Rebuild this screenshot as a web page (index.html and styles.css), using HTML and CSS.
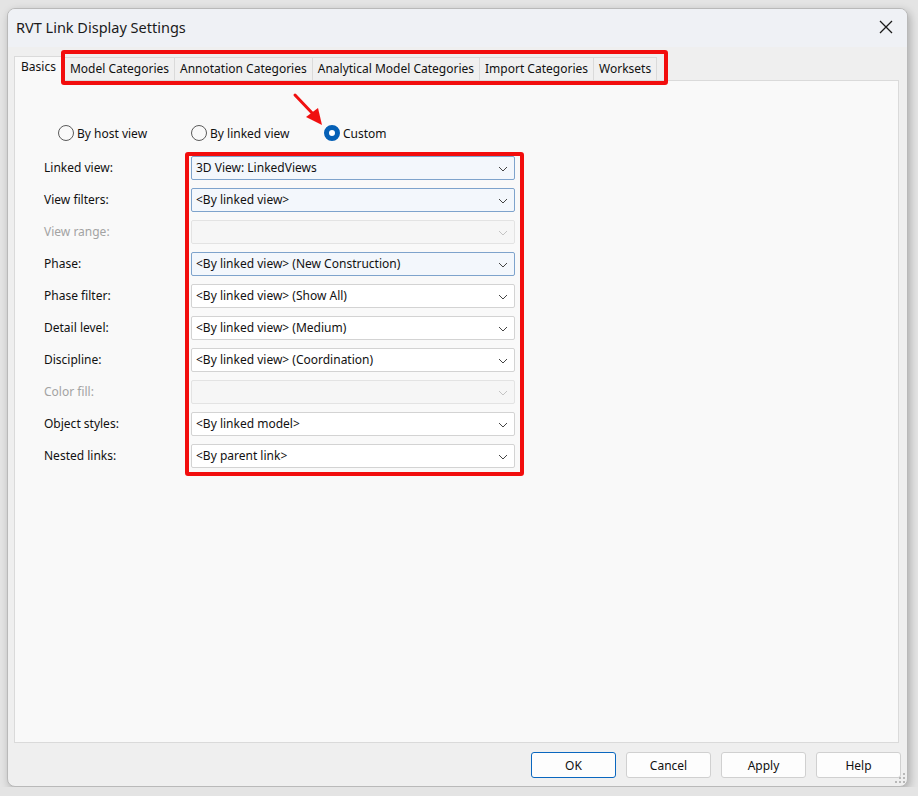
FILE: index.html
```html
<!DOCTYPE html>
<html lang="en">
<head>
  <meta charset="UTF-8" />
  <title>RVT Link Display Settings</title>
  <link rel="stylesheet" href="styles.css">
</head>
<body>

  <div class="window">
    <div class="titlebar">
      <span class="title">RVT Link Display Settings</span>
      <svg class="close" width="14" height="14" viewBox="0 0 14 14">
        <path d="M1 1 L13 13 M13 1 L1 13" stroke="#1a1a1a" stroke-width="1.3" fill="none" />
      </svg>
    </div>

    <div class="content">
      <div class="tabs">
        <div class="tab active">Basics</div>
        <div class="tab-group">
          <div class="tab">Model Categories</div>
          <div class="tab">Annotation Categories</div>
          <div class="tab">Analytical Model Categories</div>
          <div class="tab">Import Categories</div>
          <div class="tab">Worksets</div>
        </div>
      </div>

      <div class="panel">
        <svg class="arrow" width="34" height="36" viewBox="0 0 34 36">
          <path d="M3 3 L22 23" stroke="#f01010" stroke-width="3" stroke-linecap="round" fill="none" />
          <path d="M14 25 L30 33 L26 16 Z" fill="#f01010" />
        </svg>

        <div class="radios">
          <label class="radio"><span class="dot"></span>By host view</label>
          <label class="radio"><span class="dot"></span>By linked view</label>
          <label class="radio checked"><span class="dot"></span>Custom</label>
        </div>

        <div class="form">
          <div class="labels">
            <div class="label">Linked view:</div>
            <div class="label">View filters:</div>
            <div class="label disabled">View range:</div>
            <div class="label">Phase:</div>
            <div class="label">Phase filter:</div>
            <div class="label">Detail level:</div>
            <div class="label">Discipline:</div>
            <div class="label disabled">Color fill:</div>
            <div class="label">Object styles:</div>
            <div class="label">Nested links:</div>
          </div>

          <div class="combos">
            <div class="combo hot">3D View: LinkedViews<svg class="chev" viewBox="0 0 10 6"><path d="M1 1 L5 5 L9 1" /></svg></div>
            <div class="combo hot">&lt;By linked view&gt;<svg class="chev" viewBox="0 0 10 6"><path d="M1 1 L5 5 L9 1" /></svg></div>
            <div class="combo disabled"><svg class="chev" viewBox="0 0 10 6"><path d="M1 1 L5 5 L9 1" /></svg></div>
            <div class="combo hot">&lt;By linked view&gt; (New Construction)<svg class="chev" viewBox="0 0 10 6"><path d="M1 1 L5 5 L9 1" /></svg></div>
            <div class="combo">&lt;By linked view&gt; (Show All)<svg class="chev" viewBox="0 0 10 6"><path d="M1 1 L5 5 L9 1" /></svg></div>
            <div class="combo">&lt;By linked view&gt; (Medium)<svg class="chev" viewBox="0 0 10 6"><path d="M1 1 L5 5 L9 1" /></svg></div>
            <div class="combo">&lt;By linked view&gt; (Coordination)<svg class="chev" viewBox="0 0 10 6"><path d="M1 1 L5 5 L9 1" /></svg></div>
            <div class="combo disabled"><svg class="chev" viewBox="0 0 10 6"><path d="M1 1 L5 5 L9 1" /></svg></div>
            <div class="combo">&lt;By linked model&gt;<svg class="chev" viewBox="0 0 10 6"><path d="M1 1 L5 5 L9 1" /></svg></div>
            <div class="combo">&lt;By parent link&gt;<svg class="chev" viewBox="0 0 10 6"><path d="M1 1 L5 5 L9 1" /></svg></div>
          </div>
        </div>
      </div>

      <div class="buttons">
        <button class="default">OK</button>
        <button>Cancel</button>
        <button>Apply</button>
        <button>Help</button>
      </div>
    </div>

    <svg class="grip" width="10" height="10" viewBox="0 0 10 10">
      <rect x="8" y="0" width="2" height="2" fill="#b8b8b8" />
      <rect x="4" y="4" width="2" height="2" fill="#b8b8b8" />
      <rect x="8" y="4" width="2" height="2" fill="#b8b8b8" />
      <rect x="0" y="8" width="2" height="2" fill="#b8b8b8" />
      <rect x="4" y="8" width="2" height="2" fill="#b8b8b8" />
      <rect x="8" y="8" width="2" height="2" fill="#b8b8b8" />
    </svg>
  </div>

</body>
</html>
```

FILE: styles.css
```css
body {
  margin: 0;
  background-color: #e4e4e4;
  font-family: 'Noto Sans', 'Open Sans', sans-serif;
  font-size: 12px;
  color: #111;
}

.window {
  position: relative;
  width: 899px;
  height: 777px;
  margin: 8px 0 0 7px;
  background: #efefef;
  border: 1px solid #b9b9b9;
  border-radius: 8px;
  box-shadow: 2px 3px 8px rgba(0, 0, 0, 0.25);
  display: flex;
  flex-direction: column;
  overflow: hidden;
}

.titlebar {
  height: 38px;
  background: #eff1f5;
  display: flex;
  align-items: center;
  justify-content: space-between;
  padding: 0 14px 0 8px;
  flex-shrink: 0;
}

.title {
  font-size: 14.5px;
  color: #1a1a1a;
  padding-bottom: 3px;
}

.close {
  margin-bottom: 2px;
}

.content {
  flex: 1;
  display: flex;
  flex-direction: column;
  padding: 9px 8px 0 6px;
}

.tabs {
  display: flex;
  align-items: flex-end;
  height: 24px;
  position: relative;
  z-index: 1;
}

.tab {
  height: 23px;
  line-height: 22px;
  padding: 0 5px;
  background: #f0f0f0;
  border: 1px solid #dadada;
  border-left: none;
  border-bottom: none;
  box-sizing: border-box;
  white-space: nowrap;
  color: #111;
}

.tab.active {
  height: 26px;
  line-height: 20px;
  padding: 0 6px 0 6px;
  background: #f9f9f9;
  border: 1px solid #dadada;
  border-bottom: none;
  margin-bottom: -2px;
}

.tab-group {
  position: relative;
  display: flex;
  margin-left: 2px;
}

/* red annotation box */
.tab-group::after {
  content: '';
  position: absolute;
  left: -4px;
  right: -11px;
  top: -7px;
  bottom: -5px;
  border: 4px solid #f20d0d;
  border-radius: 3px;
}

.panel {
  position: relative;
  height: 663px;
  box-sizing: border-box;
  background: #f9f9f9;
  border: 1px solid #dadada;
  padding: 0 0 0 29px;
}

.arrow {
  position: absolute;
  left: 277px;
  top: 11px;
}

.radios {
  display: flex;
  height: 22px;
  align-items: center;
  margin-top: 41px;
  margin-left: 14px;
}

.radio {
  display: flex;
  align-items: center;
  color: #111;
}

.radio:nth-child(1) { width: 133px; }
.radio:nth-child(2) { width: 133px; }

.dot {
  width: 14px;
  height: 14px;
  border: 1px solid #5b5b5b;
  border-radius: 50%;
  background: #f9f9f9;
  margin-right: 3px;
}

.radio.checked .dot {
  width: 6px;
  height: 6px;
  border: 5px solid #0560b6;
  background: #fff;
}

.form {
  display: flex;
  margin-top: 12px;
}

.labels {
  width: 147px;
  display: flex;
  flex-direction: column;
  gap: 8px;
}

.label {
  height: 24px;
  line-height: 24px;
}

.label.disabled {
  color: #a3a3a3;
}

.combos {
  position: relative;
  width: 324px;
  display: flex;
  flex-direction: column;
  gap: 8px;
}

/* red annotation box */
.combos::after {
  content: '';
  position: absolute;
  left: -6px;
  right: -9px;
  top: -4px;
  bottom: -8px;
  border: 4px solid #f20d0d;
  border-radius: 3px;
}

.combo {
  position: relative;
  height: 24px;
  line-height: 22px;
  box-sizing: border-box;
  padding: 0 4px;
  background: #fff;
  border: 1px solid #d3d3d3;
  border-radius: 2px;
  white-space: nowrap;
}

.combo.hot {
  background: #f3f7fc;
  border-color: #7ea3cc;
}

.combo.disabled {
  background: #f6f6f6;
  border-color: #e3e3e3;
}

.chev {
  position: absolute;
  right: 6px;
  top: 9px;
  width: 10px;
  height: 6px;
}

.chev path {
  fill: none;
  stroke: #444;
  stroke-width: 1;
}

.combo.disabled .chev path {
  stroke: #c4c4c4;
}

.buttons {
  display: flex;
  justify-content: flex-end;
  gap: 10px;
  margin-top: 9px;
  margin-right: -2px;
}

button {
  width: 85px;
  height: 26px;
  font-family: inherit;
  font-size: 12px;
  color: #111;
  background: #fdfdfd;
  border: 1px solid #d0d0d0;
  border-radius: 3px;
}

button.default {
  border-color: #0a67bf;
}

.grip {
  position: absolute;
  right: 2px;
  bottom: 3px;
}
```
